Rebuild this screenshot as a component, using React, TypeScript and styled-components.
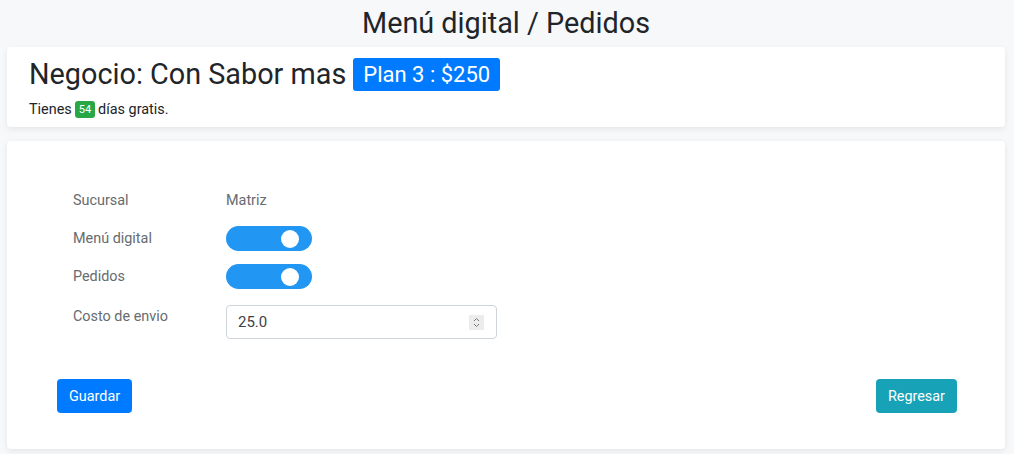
import React from 'react'
import styled, { createGlobalStyle } from 'styled-components'

const GlobalStyle = createGlobalStyle`
  body {
    margin: 0;
    background: #f7f8fa;
    font-family: Roboto, "Liberation Sans", sans-serif;
    color: #212529;
  }
`

const Page = styled.div`
  padding: 0 9px 5px 7px;
`

const Title = styled.h2`
  margin: 0;
  height: 47px;
  line-height: 46px;
  text-align: center;
  font-size: 28.8px;
  font-weight: 400;
`

const Card = styled.div<{ $height: number }>`
  background: #fff;
  border-radius: 4px;
  box-shadow: 0 2px 6px rgba(0, 0, 0, 0.08);
  height: ${({ $height }) => $height}px;
  box-sizing: border-box;
`

const HeaderCard = styled(Card)`
  padding: 11px 22px 0;
  margin-bottom: 14px;
`

const Heading = styled.h3`
  margin: 0;
  font-size: 28.8px;
  font-weight: 400;
  line-height: 33px;
  display: flex;
  align-items: center;
  gap: 7px;
`

const Badge = styled.span<{ $bg: string; $size: number }>`
  display: inline-block;
  background: ${({ $bg }) => $bg};
  color: #fff;
  font-size: ${({ $size }) => $size}px;
  line-height: 1;
  border-radius: 3px;
`

const PlanBadge = styled(Badge)`
  padding: 5.5px 10px;
`

const DaysBadge = styled(Badge)`
  padding: 3px 4px;
  margin: 0 3px;
  vertical-align: 1px;
`

const Note = styled.p`
  margin: 10px 0 0;
  font-size: 14.4px;
`

const FormCard = styled(Card)`
  padding: 47px 48px 0 50px;
`

const Fields = styled.div`
  display: grid;
  grid-template-columns: 153px 271px;
  grid-auto-rows: minmax(25px, auto);
  row-gap: 13px;
  padding-left: 16px;
  align-items: center;
`

const Label = styled.div<{ $top?: boolean }>`
  font-size: 14.4px;
  color: #666b70;
  align-self: ${({ $top }) => ($top ? 'start' : 'center')};
  padding-top: ${({ $top }) => ($top ? '6px' : '0')};
`

const Value = styled.div`
  font-size: 14.4px;
  color: #666b70;
`

const Switch = styled.div<{ $on: boolean }>`
  width: 86px;
  height: 25px;
  border-radius: 13px;
  background: ${({ $on }) => ($on ? '#2196f3' : '#ccc')};
  display: flex;
  align-items: center;
  justify-content: ${({ $on }) => ($on ? 'flex-end' : 'flex-start')};
  padding: 0 13px;
  box-sizing: border-box;
`

const Knob = styled.span`
  width: 18px;
  height: 18px;
  border-radius: 50%;
  background: #fff;
`

const InputBox = styled.div`
  height: 34px;
  border: 1px solid #ced4da;
  border-radius: 4px;
  box-sizing: border-box;
  display: flex;
  align-items: center;
  justify-content: space-between;
  padding: 0 12px 0 11px;
  font-size: 15px;
  color: #3d4247;
  margin-top: 3px;
`

const Spinner = styled.span`
  width: 15px;
  height: 15px;
  background: #ececec;
  display: flex;
  align-items: center;
  justify-content: center;
`

const Actions = styled.div`
  display: flex;
  justify-content: space-between;
  margin-top: 40px;
`

const Button = styled.button<{ $bg: string }>`
  height: 34px;
  padding: 0 12px;
  border: none;
  border-radius: 4px;
  background: ${({ $bg }) => $bg};
  color: #fff;
  font-family: inherit;
  font-size: 14.4px;
`

const Toggle = ({ on }: { on: boolean }) => (
  <Switch $on={on}>
    <Knob />
  </Switch>
)

export default function App() {
  return (
    <Page>
      <GlobalStyle />
      <Title>Menú digital / Pedidos</Title>
      <HeaderCard $height={80}>
        <Heading>
          Negocio: Con Sabor mas
          <PlanBadge $bg="#007bff" $size={22}>Plan 3 : $250</PlanBadge>
        </Heading>
        <Note>
          Tienes<DaysBadge $bg="#28a745" $size={11}>54</DaysBadge>días gratis.
        </Note>
      </HeaderCard>
      <FormCard $height={308}>
        <Fields>
          <Label>Sucursal</Label>
          <Value>Matriz</Value>
          <Label>Menú digital</Label>
          <Toggle on />
          <Label>Pedidos</Label>
          <Toggle on />
          <Label $top>Costo de envio</Label>
          <InputBox>
            25.0
            <Spinner>
              <svg width="7" height="11" viewBox="0 0 7 11" fill="none" stroke="#777" strokeWidth="1">
                <path d="M1 4 L3.5 1.5 L6 4" />
                <path d="M1 7 L3.5 9.5 L6 7" />
              </svg>
            </Spinner>
          </InputBox>
        </Fields>
        <Actions>
          <Button $bg="#007bff">Guardar</Button>
          <Button $bg="#17a2b8">Regresar</Button>
        </Actions>
      </FormCard>
    </Page>
  )
}
